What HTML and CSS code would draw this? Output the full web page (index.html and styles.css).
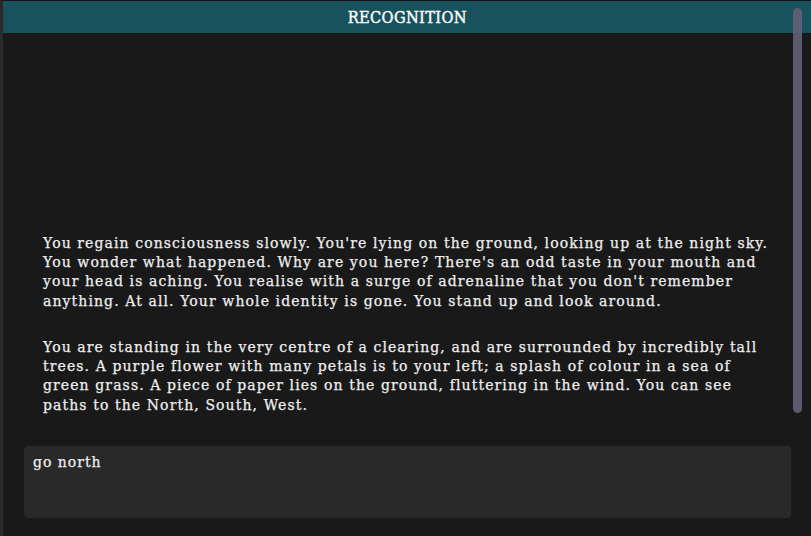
FILE: index.html
```html
<!DOCTYPE html>
<html lang="en">
<head>
<meta charset="utf-8">
<title>Recognition</title>
<link rel="stylesheet" href="styles.css">
</head>
<body>
<div class="app">
  <header class="title-bar"><h1 class="title">RECOGNITION</h1></header>
  <main class="log">
    <p class="para">You regain consciousness slowly. You're lying on the ground, looking up at the night sky.<br>You wonder what happened. Why are you here? There's an odd taste in your mouth and<br>your head is aching. You realise with a surge of adrenaline that you don't remember<br>anything. At all. Your whole identity is gone. You stand up and look around.</p>
    <p class="para">You are standing in the very centre of a clearing, and are surrounded by incredibly tall<br>trees. A purple flower with many petals is to your left; a splash of colour in a sea of<br>green grass. A piece of paper lies on the ground, fluttering in the wind. You can see<br>paths to the North, South, West.</p>
  </main>
  <div class="input-area">
    <div class="command">go north</div>
  </div>
  <div class="thumb"></div>
</div>
</body>
</html>
```

FILE: styles.css
```css
* { box-sizing: border-box; }
html, body { margin: 0; padding: 0; }
body {
  background: #191919;
  font-family: "DejaVu Serif", serif;
  color: #efefef;
}
.app {
  position: relative;
  height: 536px;
  display: flex;
  flex-direction: column;
  border-left: 3px solid #2a2a2a;
  border-top: 1px solid #131313;
  overflow: hidden;
}
.title-bar {
  height: 32px;
  background: #18525c;
  display: flex;
  align-items: center;
  justify-content: center;
}
.title {
  margin: 0;
  font-size: 17px;
  font-weight: normal;
  color: #ffffff;
  letter-spacing: 0.4px;
  transform: scaleX(0.86);
  -webkit-text-stroke: 0.45px #ffffff;
}
.log {
  flex: 1;
  display: flex;
  flex-direction: column;
  justify-content: flex-end;
  padding: 0 10px 16px 40px;
}
.para {
  margin: 0;
  font-size: 14px;
  letter-spacing: 1.1px;
  line-height: 19.3px;
  white-space: nowrap;
  -webkit-text-stroke: 0.25px #efefef;
}
.para + .para { margin-top: 27px; }
.input-area {
  padding: 15px 20px 18px 21px;
}
.command {
  height: 72px;
  background: #292929;
  border-radius: 4px;
  padding: 8px 9px;
  font-size: 14px;
  letter-spacing: 1px;
  color: #efefef;
  -webkit-text-stroke: 0.25px #efefef;
}
.thumb {
  position: absolute;
  top: 7px;
  right: 9px;
  width: 9px;
  height: 405px;
  border-radius: 5px;
  background: rgba(100, 96, 118, 0.9);
}
```
